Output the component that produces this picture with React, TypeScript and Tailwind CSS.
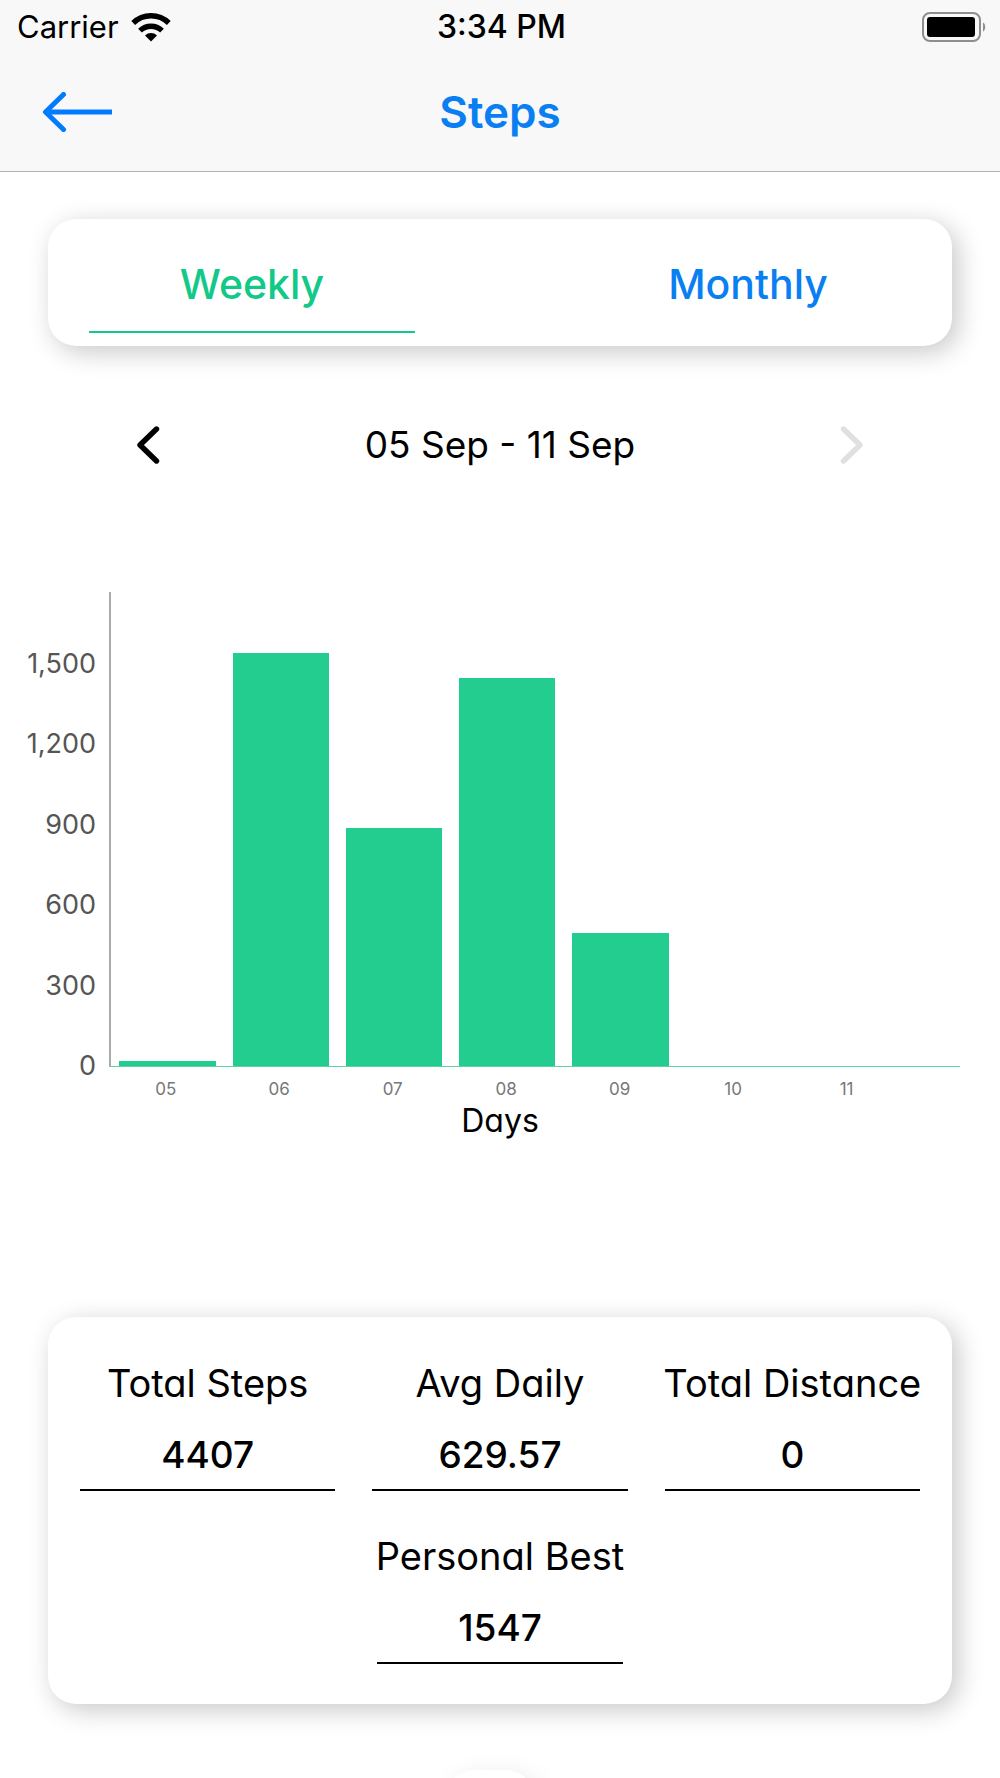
interface DaySteps {
  day: string;
  steps: number;
}

const AXIS_MAX = 1775;
const TICKS = ["1,500", "1,200", "900", "600", "300", "0"];

const week: DaySteps[] = [
  { day: "05", steps: 17 },
  { day: "06", steps: 1547 },
  { day: "07", steps: 891 },
  { day: "08", steps: 1453 },
  { day: "09", steps: 499 },
  { day: "10", steps: 0 },
  { day: "11", steps: 0 },
];

function WifiIcon() {
  return (
    <svg width="40" height="30" viewBox="0 0 40 30" aria-hidden="true">
      <g fill="none" stroke="#000" strokeWidth="5.4">
        <path d="M2.2 11a25.5 25.5 0 0 1 35.6 0" />
        <path d="M9 18.6a16 16 0 0 1 22 0" />
      </g>
      <path d="M20 29.4l-6-6a8.6 8.6 0 0 1 12 0z" />
    </svg>
  );
}

function BatteryIcon() {
  return (
    <svg width="64" height="30" viewBox="0 0 64 30" aria-hidden="true">
      <rect x="1" y="1" width="57" height="28" rx="7" fill="none" stroke="#8e8e8e" strokeWidth="2" />
      <rect x="5" y="5" width="48" height="20" rx="3" />
      <path d="M61 10.5c3 1.6 3 7.4 0 9z" fill="#8e8e8e" />
    </svg>
  );
}

function Header() {
  return (
    <header className="border-b border-[#b2b2b2] bg-[#f8f8f8] pb-[33px]">
      <div className="grid grid-cols-3 items-center pt-2 pr-[14px] pl-[17px] text-[31px] leading-[38px]">
        <div className="flex items-center gap-3">
          <span>Carrier</span>
          <WifiIcon />
        </div>
        <span className="text-center text-[32px] font-medium">3:34 PM</span>
        <div className="flex justify-end">
          <BatteryIcon />
        </div>
      </div>
      <div className="grid grid-cols-3 items-center px-[42px] pt-10">
        <button type="button" aria-label="Back" className="w-fit">
          <svg width="70" height="40" viewBox="0 0 70 40" fill="none" stroke="#007aff" strokeWidth="5">
            <path d="M3 20h67" />
            <path d="M21.5 2.5L3.5 20l18 17.5" strokeLinecap="round" strokeLinejoin="round" />
          </svg>
        </button>
        <h1 className="text-center text-[44px] leading-[52px] font-semibold text-[#0a7ff2]">Steps</h1>
      </div>
    </header>
  );
}

function PeriodTabs() {
  return (
    <div
      role="tablist"
      className="mx-12 mt-[47px] grid grid-cols-2 gap-[170px] rounded-[28px] bg-white px-[41px] pt-[37px] pb-[13px] shadow-[6px_6px_26px_rgba(0,0,0,0.22)]"
    >
      <button
        type="button"
        role="tab"
        aria-selected="true"
        className="border-b-2 border-[#12c988] pb-[19px] text-[41px] leading-14 font-medium text-[#12c988]"
      >
        Weekly
      </button>
      <button
        type="button"
        role="tab"
        aria-selected="false"
        className="border-b-2 border-transparent pb-[19px] text-[41px] leading-14 font-medium text-[#0a7ff2]"
      >
        Monthly
      </button>
    </div>
  );
}

function Chevron({ direction }: { direction: "left" | "right" }) {
  return (
    <svg width="24" height="40" viewBox="0 0 24 40" fill="none" stroke="currentColor" strokeWidth="5.4" strokeLinecap="round" strokeLinejoin="round">
      <path d={direction === "left" ? "M20.5 4L4 20l16.5 16" : "M3.5 4L20 20 3.5 36"} />
    </svg>
  );
}

function WeekPicker() {
  return (
    <div className="mx-34 mt-[73px] flex items-center justify-between text-[37px] leading-[52px]">
      <button type="button" aria-label="Previous week">
        <Chevron direction="left" />
      </button>
      <span>05 Sep - 11 Sep</span>
      <button type="button" aria-label="Next week" disabled className="text-[#e0e0e0]">
        <Chevron direction="right" />
      </button>
    </div>
  );
}

function StepsChart() {
  return (
    <section className="mt-[121px]">
      <div className="flex pr-10">
        <div className="w-[109px] shrink-0 pt-[58px] pr-[13px]">
          <ul className="flex h-[430px] flex-col justify-between text-right text-[27px] leading-7 text-[#555]">
            {TICKS.map((tick) => (
              <li key={tick}>{tick}</li>
            ))}
          </ul>
        </div>
        <div className="flex-1">
          <div className="flex h-[475px] items-end border-b border-l-2 border-b-[#5fd3a3] border-l-[#aaa]">
            {week.map(({ day, steps }) => (
              <div key={day} className="flex h-full flex-2 items-end justify-center">
                <div className="w-[85%] bg-[#22cd8f]" style={{ height: `${(steps / AXIS_MAX) * 100}%` }} />
              </div>
            ))}
            <div className="flex-1" />
          </div>
          <div className="flex pt-[10px] text-center text-[17px] leading-6 text-[#777]">
            {week.map(({ day }) => (
              <span key={day} className="flex-2">
                {day}
              </span>
            ))}
            <span className="flex-1" />
          </div>
        </div>
      </div>
      <p className="text-center text-[32px] leading-10">Days</p>
    </section>
  );
}

function Stat({ label, value }: { label: string; value: string }) {
  return (
    <div className="flex flex-col items-center border-b-2 border-black pb-2 whitespace-nowrap">
      <dt className="-mx-4 text-[38px] leading-[52px]">{label}</dt>
      <dd className="pt-5 text-[37px] leading-[52px] font-medium">{value}</dd>
    </div>
  );
}

function Summary() {
  return (
    <dl className="mx-12 mt-44 grid grid-cols-3 gap-x-[37px] gap-y-[39px] rounded-[28px] bg-white px-8 pt-10 pb-10 shadow-[6px_6px_26px_rgba(0,0,0,0.22)]">
      <Stat label="Total Steps" value="4407" />
      <Stat label="Avg Daily" value="629.57" />
      <Stat label="Total Distance" value="0" />
      <div className="col-start-2 px-[5px]">
        <Stat label="Personal Best" value="1547" />
      </div>
    </dl>
  );
}

export default function App() {
  return (
    <div className="h-screen overflow-hidden bg-white font-['Inter',sans-serif] text-black">
      <Header />
      <main className="[font-feature-settings:'cv11']">
        <PeriodTabs />
        <WeekPicker />
        <StepsChart />
        <Summary />
        <div className="mt-[66px] flex justify-center pr-5">
          <button
            type="button"
            aria-label="More"
            className="h-28 w-22 rounded-[28px] bg-white shadow-[6px_6px_26px_rgba(0,0,0,0.1)]"
          />
        </div>
      </main>
    </div>
  );
}
